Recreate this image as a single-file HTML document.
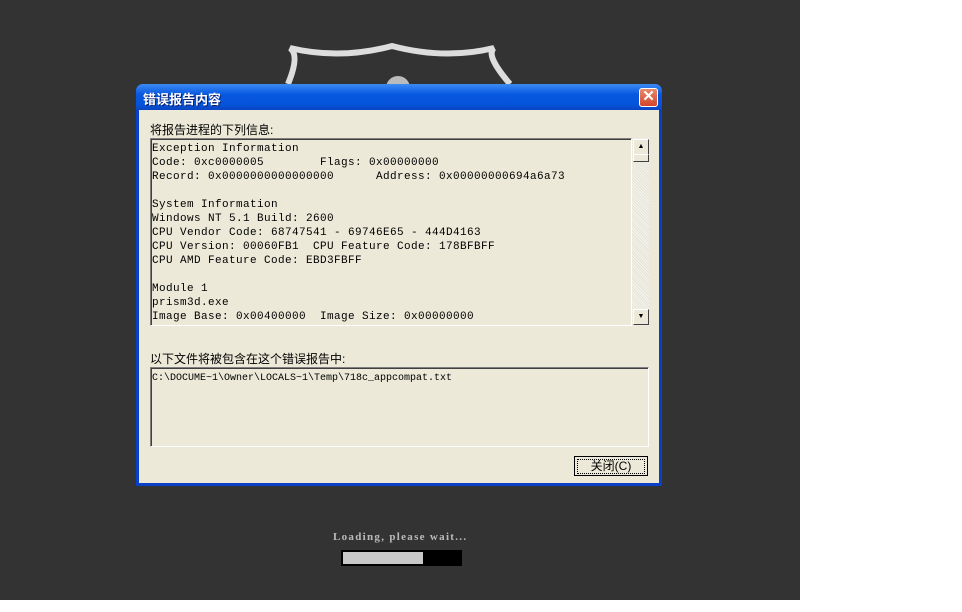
<!DOCTYPE html>
<html><head><meta charset="utf-8"><style>
body{margin:0;width:962px;height:612px;background:#fff;position:relative;overflow:hidden;font-family:"Liberation Sans","Noto Sans CJK SC",sans-serif}
.bg{position:absolute;left:0;top:0;width:800px;height:600px;background:#333333}
.dlg{position:absolute;left:136px;top:84px;width:526px;height:402px;background:#0a3fc8;border-radius:7px 7px 0 0}
.title{position:absolute;left:0;top:0;width:526px;height:26px;background:linear-gradient(#3b8cf5,#0858e0 40%,#0553d8 80%,#0a44c0);border-radius:7px 7px 0 0}
.title span{position:absolute;left:7px;top:5px;color:#fff;font-size:13px;font-weight:bold;text-shadow:1px 1px #0a1f70}
.x{position:absolute;right:4px;top:4px;width:19px;height:19px;background:linear-gradient(#e88a6c,#d2452a);border:1px solid #fff;border-radius:3px;box-sizing:border-box;color:#fff;font-size:15px;line-height:16px;text-align:center;font-weight:bold}
.body{position:absolute;left:3px;top:26px;width:520px;height:373px;background:#ece9d8}
.lbl{position:absolute;font-size:12px;color:#000}
.box{position:absolute;background:#ece9d8;border:1px solid;border-color:#7f7f7f #fff #fff #7f7f7f;box-shadow:inset 1px 1px #404040;}
pre{margin:0;font-family:"Liberation Mono",monospace;font-size:11px;line-height:14px;color:#000}
.sb{position:absolute;left:632px;top:138px;width:17px;height:188px;background:repeating-linear-gradient(45deg,#f4f3ee 0 1px,#e6e3d6 1px 2px)}
.btnsm{position:absolute;left:1px;width:14px;height:14px;background:#ece9d8;border:1px solid;border-color:#fff #404040 #404040 #fff;font-size:7px;text-align:center;line-height:14px}
.btn{position:absolute;left:574px;top:456px;width:74px;height:20px;border:1px solid #000;background:#ece9d8;box-sizing:border-box;font-size:12px;text-align:center;line-height:18px}
.btn span{display:block;margin:2px;border:1px dotted #000;line-height:13px}
</style></head><body>
<div class="bg"></div>
<svg style="position:absolute;left:280px;top:40px" width="240" height="50"><path d="M8 44 Q20 15 10 8 Q60 20 112 6 Q165 20 214 8 Q205 15 230 44" fill="none" stroke="#ddd" stroke-width="6"/><circle cx="118" cy="48" r="12" fill="#bbb"/></svg>
<div class="dlg"><div class="title"><span>错误报告内容</span><div class="x">✕</div></div><div class="body"></div></div>
<div class="lbl" style="left:150px;top:121px">将报告进程的下列信息:</div>
<div class="box" style="left:150px;top:138px;width:480px;height:186px;overflow:hidden"><pre style="padding:3px 0 0 1px;letter-spacing:0.4px">Exception Information
Code: 0xc0000005        Flags: 0x00000000
Record: 0x0000000000000000      Address: 0x00000000694a6a73

System Information
Windows NT 5.1 Build: 2600
CPU Vendor Code: 68747541 - 69746E65 - 444D4163
CPU Version: 00060FB1  CPU Feature Code: 178BFBFF
CPU AMD Feature Code: EBD3FBFF

Module 1
prism3d.exe
Image Base: 0x00400000  Image Size: 0x00000000</pre></div>
<div class="sb"><div class="btnsm" style="top:1px">▲</div><div class="btnsm" style="top:16px;height:6px"></div><div class="btnsm" style="top:171px">▼</div></div>
<div class="lbl" style="left:150px;top:350px">以下文件将被包含在这个错误报告中:</div>
<div class="box" style="left:150px;top:367px;width:497px;height:78px"><pre style="padding:4px 0 0 1px;font-size:10px">C:\DOCUME~1\Owner\LOCALS~1\Temp\718c_appcompat.txt</pre></div>
<div class="btn"><span>关闭(C)</span></div>
<div style="position:absolute;left:333px;top:531px;color:#bbb;font-family:'Liberation Serif',serif;font-size:11px;font-weight:bold;letter-spacing:1.3px">Loading, please wait...</div>
<div style="position:absolute;left:341px;top:550px;width:121px;height:16px;background:#000"><div style="position:absolute;left:2px;top:2px;width:80px;height:12px;background:#c8c8c8"></div></div>
</body></html>
